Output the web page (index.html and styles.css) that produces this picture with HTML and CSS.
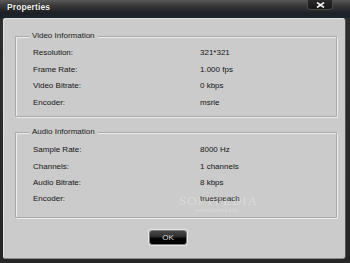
FILE: index.html
```html
<!DOCTYPE html>
<html>
<head>
<meta charset="utf-8">
<link rel="stylesheet" href="styles.css">
</head>
<body>
<div class="window">
  <div class="titlebar">
    <span class="title">Properties</span>
    <div class="close">
      <svg width="9" height="6" viewBox="0 0 9 6"><path d="M1 0.5 L8 5.5 M8 0.5 L1 5.5" stroke="#f2f2f2" stroke-width="1.6" fill="none"/></svg>
    </div>
  </div>
  <div class="panel">
    <div class="group video">
      <span class="legend">Video Information</span>
      <div class="row"><span class="label">Resolution:</span><span class="value">321*321</span></div>
      <div class="row"><span class="label">Frame Rate:</span><span class="value">1.000 fps</span></div>
      <div class="row"><span class="label">Video Bitrate:</span><span class="value">0 kbps</span></div>
      <div class="row"><span class="label">Encoder:</span><span class="value">msrle</span></div>
    </div>
    <div class="group audio">
      <span class="legend">Audio Information</span>
      <div class="row"><span class="label">Sample Rate:</span><span class="value">8000 Hz</span></div>
      <div class="row"><span class="label">Channels:</span><span class="value">1 channels</span></div>
      <div class="row"><span class="label">Audio Bitrate:</span><span class="value">8 kbps</span></div>
      <div class="row"><span class="label">Encoder:</span><span class="value">truespeach</span></div>
      <div class="watermark"><span class="wm-big">SOFTPEDIA</span><span class="wm-small">www.softpedia.com</span></div>
    </div>
    <div class="actions">
      <button class="ok">OK</button>
    </div>
  </div>
</div>
</body>
</html>
```
FILE: styles.css
```css
html, body {
  margin: 0;
  padding: 0;
  background: #2a2a2a;
}
.window {
  width: 350px;
  height: 263px;
  background: linear-gradient(to bottom, #2e2e2e, #262626);
  font-family: "Liberation Sans", Arial, sans-serif;
  font-size: 8px;
  color: #141414;
  display: flex;
  flex-direction: column;
  overflow: hidden;
}
.titlebar {
  height: 18px;
  flex: none;
  position: relative;
  background: linear-gradient(to bottom, #5a5a5a 0%, #3a3a3a 30%, #1e2126 70%, #1a2530 100%);
  display: flex;
  align-items: flex-start;
}
.title {
  color: #f4f4f4;
  font-weight: bold;
  font-size: 8.5px;
  line-height: 10px;
  margin: 2px 0 0 7px;
  letter-spacing: 0.1px;
  text-shadow: 0 0 1px #000;
}
.close {
  position: absolute;
  left: 308px;
  top: 0;
  width: 24px;
  height: 9px;
  background: linear-gradient(to bottom, #2a2a2a, #161616);
  border-radius: 0 0 3px 3px;
  box-shadow: 0 0 0 1px #4a4a4a;
  display: flex;
  align-items: center;
  justify-content: center;
}
.panel {
  margin: 0 5px 5px 3px;
  height: 240px;
  background: #cbcbcb;
  border-radius: 3px 3px 2px 2px;
  box-shadow: inset 1px 1px 0 #e2e2e2, 0 1px 0 #8a8a8a, 1px 0 0 #555;
  padding: 18px 8px 0 12px;
  box-sizing: border-box;
  display: flex;
  flex-direction: column;
}
.group {
  position: relative;
  border: 1px solid #a9a9a9;
  box-shadow: inset 1px 1px 0 #ececec, 1px 1px 0 #ececec;
  border-radius: 1px;
}
.video {
  padding: 7px 0 5px 17px;
}
.audio {
  margin-top: 15px;
  padding: 9px 0 10px 17px;
}
.legend {
  position: absolute;
  top: -6px;
  left: 13px;
  padding: 0 3px;
  background: #cbcbcb;
  line-height: 10px;
  color: #222;
}
.row {
  display: flex;
  height: 16.7px;
  align-items: center;
}
.audio .row {
  height: 16.2px;
}
.label {
  width: 167px;
  flex: none;
}
.value {
  flex: none;
}
.watermark {
  position: absolute;
  left: 163px;
  top: 61px;
  display: flex;
  flex-direction: column;
  align-items: flex-start;
  pointer-events: none;
}
.wm-big {
  font-family: "Liberation Serif", serif;
  font-size: 13px;
  letter-spacing: 1px;
  color: rgba(255, 255, 255, 0.3);
  line-height: 13px;
}
.wm-small {
  font-size: 5px;
  color: rgba(255, 255, 255, 0.3);
  margin-left: 16px;
  line-height: 6px;
}
.actions {
  display: flex;
  padding: 12px 0 0 134px;
}
.ok {
  width: 38px;
  height: 15px;
  padding: 0;
  margin: 0;
  border: 1px solid #7a7a7a;
  border-radius: 3px;
  background: linear-gradient(to bottom, #4a4a4a 0%, #2c2c2c 45%, #050505 55%, #000 100%);
  color: #d8d8d8;
  font-family: "Liberation Sans", Arial, sans-serif;
  font-size: 8px;
  line-height: 13px;
  box-shadow: 0 0 0 1px #e8e8e8;
}
```
